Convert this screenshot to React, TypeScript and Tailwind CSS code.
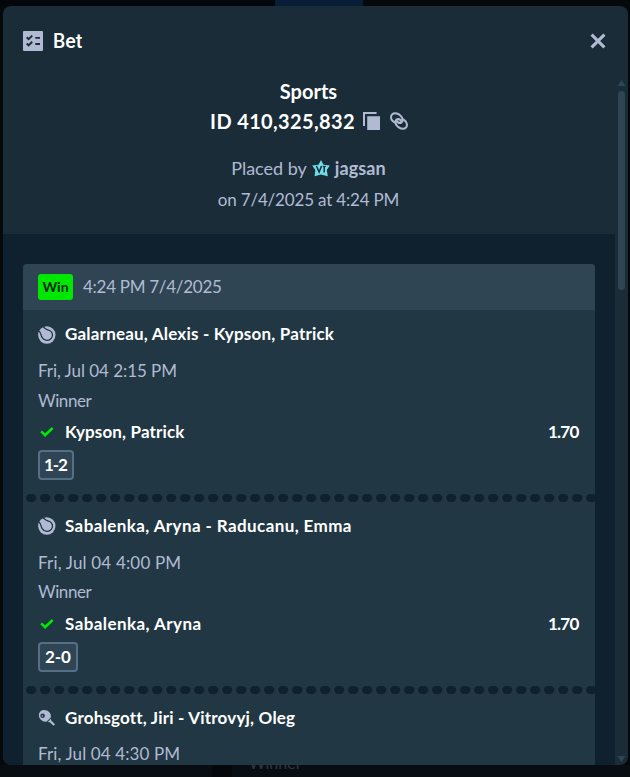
import React from "react";

const SANS = "font-['Lato','Open_Sans',sans-serif]";

function T({ className, children }: { className: string; children: React.ReactNode }) {
  return <span className={`block whitespace-nowrap ${className}`}>{children}</span>;
}

function ListIcon() {
  return (
    <svg width="20" height="20" viewBox="0 0 20 20" className="shrink-0">
      <rect width="20" height="20" rx="1" fill="#b1bad3" />
      <path d="M3.7 6.3 5.6 8.2 9.2 4.6M3.7 12.5 5.6 14.4 9.2 10.8" fill="none" stroke="#1a2c38" strokeWidth="2" />
      <path d="M12.3 6.8H17M12.3 13H17" stroke="#1a2c38" strokeWidth="1.8" />
    </svg>
  );
}

function CloseIcon() {
  return (
    <svg width="16" height="16" viewBox="0 0 16 16">
      <path d="M1.6 1.6 14.4 14.4M14.4 1.6 1.6 14.4" stroke="#b1bad3" strokeWidth="3.1" />
    </svg>
  );
}

function CopyIcon() {
  return (
    <svg width="18" height="18" viewBox="0 0 18 18">
      <path d="M4.2 4.2H17V18H4.2z" fill="#b1bad3" />
      <path d="M1 14V1H13.6" fill="none" stroke="#b1bad3" strokeWidth="2" />
    </svg>
  );
}

function LinkIcon() {
  return (
    <svg width="18" height="18" viewBox="0 0 18 18" fill="none" stroke="#b1bad3" strokeWidth="2">
      <path d="M6.3 11C3.9 10.6 1 8.2 1 5.2 1 2.7 2.9 1.1 5.3 1.2 8.4 1.3 12.6 4.4 12.6 7.8 12.6 10.2 10.8 11.4 9.2 11 7.9 10.6 7 9.4 7.3 8.1" />
      <path d="M11.7 7C14.1 7.4 17 9.8 17 12.8 17 15.3 15.1 16.9 12.7 16.8 9.6 16.7 5.4 13.6 5.4 10.2 5.4 7.8 7.2 6.6 8.8 7 10.1 7.4 11 8.6 10.7 9.9" />
    </svg>
  );
}

function StarIcon() {
  return (
    <svg width="18" height="18" viewBox="0 0 18 18">
      <path d="M9 .9 11.5 5.8 17.8 6.4 14.8 11 15.8 17.2 9 15.4 2.6 17.2 3.3 11 .2 6.4 6.5 5.8z" fill="#6fdde7" />
      <path d="M4.4 7 7.1 13 9.5 7M12.2 7V13.4" fill="none" stroke="#1a2c38" strokeWidth="1.5" />
      <path d="M10.6 7.4H13.9" stroke="#1a2c38" strokeWidth="1" />
    </svg>
  );
}

function TennisIcon() {
  return (
    <svg width="18" height="18" viewBox="0 0 18 18">
      <circle cx="8.8" cy="9" r="8.7" fill="#b1bad3" />
      <path d="M.4 4.8C3.2 5.7 2.4 9 4.2 11.6 6.5 15 11 15.2 13.3 12.3 15.8 9.2 14.3 5.3 10.8 4.2 8.5 3.5 6.1 3 5.2.4" fill="none" stroke="#213743" strokeWidth="1.3" />
    </svg>
  );
}

function PaddleIcon() {
  return (
    <svg width="18" height="18" viewBox="0 0 18 18">
      <path d="M2.5 2.3C5 .1 9 .7 11.3 3.2 13.1 5.1 13.3 7.2 12.5 8.8L8.8 12.4C6.8 13 4.7 12.5 2.9 10.8.4 8.3.2 4.5 2.5 2.3z" fill="#b1bad3" />
      <path d="M13 9.6 13.2 11.6 17 15.3 15.5 16.8 11.8 13.2 9.8 13z" fill="#b1bad3" />
      <circle cx="4.6" cy="6.8" r="2.3" fill="#213743" />
      <circle cx="4.3" cy="7" r=".8" fill="#b1bad3" />
    </svg>
  );
}

function CheckIcon() {
  return (
    <svg width="14" height="12" viewBox="0 0 14 12">
      <path d="M1.2 5.4 5.1 9.2 12.6 2" fill="none" stroke="#00e701" strokeWidth="2.7" />
    </svg>
  );
}

function Dots() {
  return (
    <svg width="572" height="8" viewBox="0 0 572 8" className="block">
      {Array.from({ length: 41 }, (_, i) => (
        <ellipse key={i} cx={8.2 + i * 14} cy="4" rx="5.2" ry="4.2" fill="#0f212e" />
      ))}
    </svg>
  );
}

interface LegProps {
  icon: React.ReactNode;
  title: React.ReactNode;
  time: React.ReactNode;
  pick?: React.ReactNode;
  score?: React.ReactNode;
}

function Leg({ icon, title, time, pick, score }: LegProps) {
  return (
    <div className="h-[183.75px] px-[15px] pt-3 text-[17px] leading-6">
      <div className="flex h-6 items-center gap-[9px]">
        <span className="mt-px w-[18px]">{icon}</span>
        {title}
      </div>
      <div className="mt-[12.85px] h-6 text-[#b1bad3]">{time}</div>
      <div className="mt-[5.8px] h-6 text-[#b1bad3]">
        <T className="tracking-[-0.4px]">Winner</T>
      </div>
      <div className="mt-[7.2px] flex h-6 items-center font-bold text-white">
        <span className="w-[27px] pl-0.5"><CheckIcon /></span>
        {pick}
        <span className="ml-auto pr-[1.5px]"><T className="tracking-[-0.75px]">1.70</T></span>
      </div>
      <div className="mt-[6px] inline-flex h-[30px] items-center rounded border-2 border-[#557086] bg-[#2f4553] font-bold text-white">
        {score}
      </div>
    </div>
  );
}

export default function App() {
  return (
    <div className={`relative flex h-[777px] w-[630px] flex-col overflow-hidden bg-[#06090c] ${SANS}`}>
      <div className="flex h-1.5 shrink-0">
        <div className="w-[275px] bg-[#03060a]" />
        <div className="w-[88px] bg-[#071d38]" />
      </div>
      <div className="ml-[3px] h-[759px] w-[625px] shrink-0 overflow-hidden rounded-lg bg-[#1a2c38]">
        <header className="flex h-[70px] items-center justify-between pl-5 pr-[22px]">
          <div className="flex items-center gap-2.5">
            <ListIcon />
            <T className="pt-px font-[family-name:Roboto] text-[19.5px] font-medium leading-6 text-white">Bet</T>
          </div>
          <CloseIcon />
        </header>
        <div className="flex h-[689px]">
          <main className="w-[612px] overflow-hidden bg-[#0f212e]">
            <section className="flex h-[158px] flex-col items-center bg-[#1a2c38] text-[#b1bad3]">
              <h1 className="h-[30px] text-xl font-bold leading-[30px] text-white"><T className="-ml-px tracking-[0px]">Sports</T></h1>
              <div className="flex h-[30px] items-center gap-[9px] text-xl font-bold text-white">
                <T className="-mr-px tracking-[0.36px]">ID 410,325,832</T>
                <CopyIcon />
                <LinkIcon />
              </div>
              <div className="mt-[17px] flex h-[30px] items-center gap-[5px] text-lg">
                <T className="-ml-px tracking-[0px]">Placed by</T>
                <StarIcon />
                <T className="font-bold tracking-[0.1px]">jagsan</T>
              </div>
              <div className="mt-px h-8 text-[17px] leading-8"><T className="-ml-px tracking-[-0.18px]">on 7/4/2025 at 4:24 PM</T></div>
            </section>
            <section className="ml-5 mt-[30px] w-[572px] overflow-hidden rounded-t bg-[#213743]">
              <div className="flex h-[46px] items-center gap-2.5 bg-[#2f4553] px-[15px] text-[#b1bad3]">
                <span className="flex h-[26px] w-[35px] items-center justify-center rounded-[3px] bg-[#00e701] pb-px text-sm font-bold text-[#05280a]"><T className="tracking-[0px]">Win</T></span>
                <T className="text-[17px] tracking-[-0.28px]">4:24 PM 7/4/2025</T>
              </div>
              <Leg
                icon={<TennisIcon />}
                title={<T className="font-bold text-white tracking-[0.2px]">Galarneau, Alexis - Kypson, Patrick</T>}
                time={<T className="tracking-[-0.05px]">Fri, Jul 04 2:15 PM</T>}
                pick={<T className="tracking-[0.15px]">Kypson, Patrick</T>}
                score={<T className="pl-1 pr-[5.5px] tracking-[-1.1px]">1-2</T>}
              />
              <Dots />
              <Leg
                icon={<TennisIcon />}
                title={<T className="font-bold text-white tracking-[0.4px]">Sabalenka, Aryna - Raducanu, Emma</T>}
                time={<T className="tracking-[0.18px]">Fri, Jul 04 4:00 PM</T>}
                pick={<T className="tracking-[0.43px]">Sabalenka, Aryna</T>}
                score={<T className="px-[5px] tracking-[-0.1px]">2-0</T>}
              />
              <Dots />
              <Leg
                icon={<PaddleIcon />}
                title={<T className="font-bold text-white tracking-[0.19px]">Grohsgott, Jiri - Vitrovyj, Oleg</T>}
                time={<T className="tracking-[0.12px]">Fri, Jul 04 4:30 PM</T>}
              />
            </section>
          </main>
          <div className="flex w-[13px] flex-col items-center">
            <svg width="9" height="6" viewBox="0 0 9 6" className="mt-1"><path d="M.5 6 4.5 0 8.5 6z" fill="#2f4553" /></svg>
            <div className="mt-[5px] h-[199px] w-[7px] rounded-full bg-[#2f4553]" />
            <svg width="9" height="6" viewBox="0 0 9 6" className="mb-[3px] mt-auto"><path d="M.5 0H8.5L4.5 6z" fill="#2f4553" /></svg>
          </div>
        </div>
      </div>
      <div className="flex h-3 overflow-hidden">
        <div className="w-[212px] bg-[#080d11]" />
        <div className="w-5 bg-[#04080b]" />
        <div className="flex-1 bg-[#080d11] pl-[17px] text-base leading-6 text-[#31363d]"><div className="-mt-[14px]">Winner</div></div>
      </div>
    </div>
  );
}
